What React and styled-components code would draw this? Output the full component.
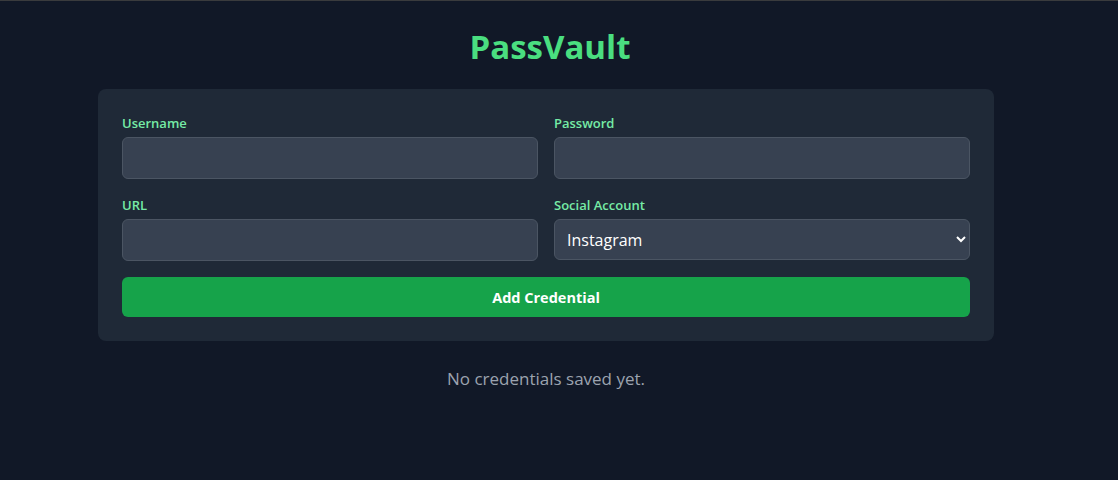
import styled, { createGlobalStyle } from 'styled-components'

const GlobalStyle = createGlobalStyle`
  html, body {
    margin: 0;
    padding: 0;
    background: #111827;
  }
  body {
    font-family: "Open Sans", "Noto Sans", sans-serif;
    border-top: 1px solid #3a3b3d;
  }
  * { box-sizing: border-box; }
`

const Page = styled.div`
  min-height: 479px;
  padding: 28px 42px 24px 16px;
  display: flex;
  flex-direction: column;
  align-items: center;
`

const Title = styled.h1`
  margin: 0 0 24px;
  padding-left: 8px;
  font-size: 33px;
  line-height: 36px;
  font-weight: 700;
  color: #4ade80;
`

const Card = styled.form`
  width: 896px;
  background: #1f2937;
  border-radius: 8px;
  padding: 24px;
  display: flex;
  flex-direction: column;
  gap: 16px;
`

const Grid = styled.div`
  display: grid;
  grid-template-columns: 1fr 1fr;
  gap: 16px;
`

const Field = styled.label`
  display: flex;
  flex-direction: column;
  gap: 4px;
`

const Label = styled.span`
  font-size: 13px;
  line-height: 20px;
  font-weight: 600;
  color: #76eba6;
`

const Input = styled.input`
  height: 42px;
  padding: 8px 12px;
  font: inherit;
  font-size: 16px;
  color: #fff;
  background: #374151;
  border: 1px solid #4b5563;
  border-radius: 6px;
  outline: none;
`

const Select = styled.select`
  height: 41px;
  padding: 0 8px;
  font: inherit;
  font-size: 16px;
  color: #fff;
  background: #374151;
  border: 1px solid #4b5563;
  border-radius: 6px;
  outline: none;
  color-scheme: dark;
`

const Button = styled.button`
  height: 40px;
  font: inherit;
  font-size: 14.5px;
  font-weight: 700;
  color: #fff;
  background: #16a34a;
  border: none;
  border-radius: 6px;
  cursor: pointer;
`

const Empty = styled.p`
  margin: 24px 0 0;
  font-size: 17px;
  line-height: 28px;
  color: #9ca3af;
`

const App = () => {
  return (
    <>
      <GlobalStyle />
      <Page>
        <Title>PassVault</Title>
        <Card onSubmit={(e) => e.preventDefault()}>
          <Grid>
            <Field>
              <Label>Username</Label>
              <Input type="text" />
            </Field>
            <Field>
              <Label>Password</Label>
              <Input type="password" />
            </Field>
            <Field>
              <Label>URL</Label>
              <Input type="text" />
            </Field>
            <Field>
              <Label>Social Account</Label>
              <Select defaultValue="Instagram">
                <option>Instagram</option>
                <option>Facebook</option>
                <option>Twitter</option>
                <option>LinkedIn</option>
              </Select>
            </Field>
          </Grid>
          <Button type="submit">Add Credential</Button>
        </Card>
        <Empty>No credentials saved yet.</Empty>
      </Page>
    </>
  )
}

export default App
